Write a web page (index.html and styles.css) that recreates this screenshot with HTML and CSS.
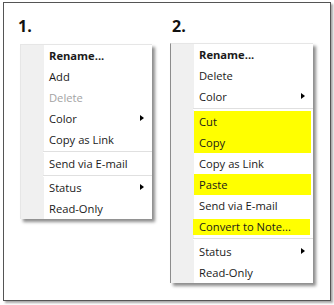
FILE: index.html
```html
<!DOCTYPE html>
<html>
<head>
<meta charset="utf-8">
<link rel="stylesheet" href="styles.css">
</head>
<body>
<div class="frame">
  <div class="panel panel-one">
    <div class="label">1.</div>
    <div class="menu menu-one">
      <div class="item bold">Rename...</div>
      <div class="item">Add</div>
      <div class="item disabled">Delete</div>
      <div class="item sub">Color<span class="arrow"></span></div>
      <div class="item">Copy as Link</div>
      <div class="sep"></div>
      <div class="item">Send via E-mail</div>
      <div class="sep"></div>
      <div class="item sub">Status<span class="arrow"></span></div>
      <div class="item">Read-Only</div>
    </div>
  </div>
  <div class="panel panel-two">
    <div class="label">2.</div>
    <div class="menu menu-two">
      <div class="item bold">Rename...</div>
      <div class="item">Delete</div>
      <div class="item sub">Color<span class="arrow"></span></div>
      <div class="sep"></div>
      <div class="item hl">Cut</div>
      <div class="item hl">Copy</div>
      <div class="item">Copy as Link</div>
      <div class="item hl">Paste</div>
      <div class="item">Send via E-mail</div>
      <div class="item hl-short">Convert to Note...</div>
      <div class="sep"></div>
      <div class="item sub">Status<span class="arrow"></span></div>
      <div class="item">Read-Only</div>
    </div>
  </div>
</div>
</body>
</html>
```

FILE: styles.css
```css
html, body {
  margin: 0;
  padding: 0;
  background: #fff;
}
body {
  width: 334px;
  height: 305px;
  overflow: hidden;
  font-family: "Open Sans", "Noto Sans", sans-serif;
}
.frame {
  margin: 2px 0 0 3px;
  width: 326px;
  height: 297px;
  border: 1px solid #555;
  box-shadow: 2px 2px 2px rgba(0, 0, 0, 0.35);
  display: flex;
}
.panel {
  display: flex;
  flex-direction: column;
  padding-top: 13px;
}
.panel-one {
  width: 166px;
  padding-left: 14px;
  box-sizing: border-box;
}
.panel-two {
  flex: 1;
}
.label {
  font-weight: 700;
  font-size: 16px;
  line-height: 20px;
  color: #111;
}
.panel-two .label {
  margin-left: 2px;
}
.menu {
  position: relative;
  background: linear-gradient(to right, #f0f0f0 23px, #fff 23px);
  border-top: 1px solid #e6e6e6;
  border-left: 1px solid #e6e6e6;
  box-shadow: 3px 3px 3px rgba(0, 0, 0, 0.45);
  padding: 0;
  font-size: 11.2px;
  color: #1a1a1a;
}
.menu-one {
  margin-top: 8px;
  margin-left: 2px;
  width: 131px;
}
.menu-two {
  margin-top: 7px;
  width: 142px;
  border-left: 1px solid #8c8c8c;
}
.item {
  height: 21px;
  line-height: 21px;
  padding-left: 28px;
  position: relative;
  white-space: nowrap;
}
.bold {
  font-weight: 700;
}
.disabled {
  color: #a3a3a3;
}
.hl {
  background: linear-gradient(to right, transparent 23px, #ffff00 23px, #ffff00 calc(100% - 2px), transparent calc(100% - 2px));
}
.hl-short {
  background: linear-gradient(to right, transparent 22px, #ffff00 22px, #ffff00 calc(100% - 3px), transparent calc(100% - 3px));
  background-size: 100% 16px;
  background-position: 0 3px;
  background-repeat: no-repeat;
}
.arrow {
  position: absolute;
  right: 8px;
  top: 7px;
  width: 0;
  height: 0;
  border-top: 3.5px solid transparent;
  border-bottom: 3.5px solid transparent;
  border-left: 4px solid #000;
}
.sep {
  height: 1px;
  margin: 1px 0 0 22px;
  background: #e0e0e0;
  border-bottom: 1px solid #fff;
}
.menu-two .sep {
  margin-bottom: 1px;
}
```
